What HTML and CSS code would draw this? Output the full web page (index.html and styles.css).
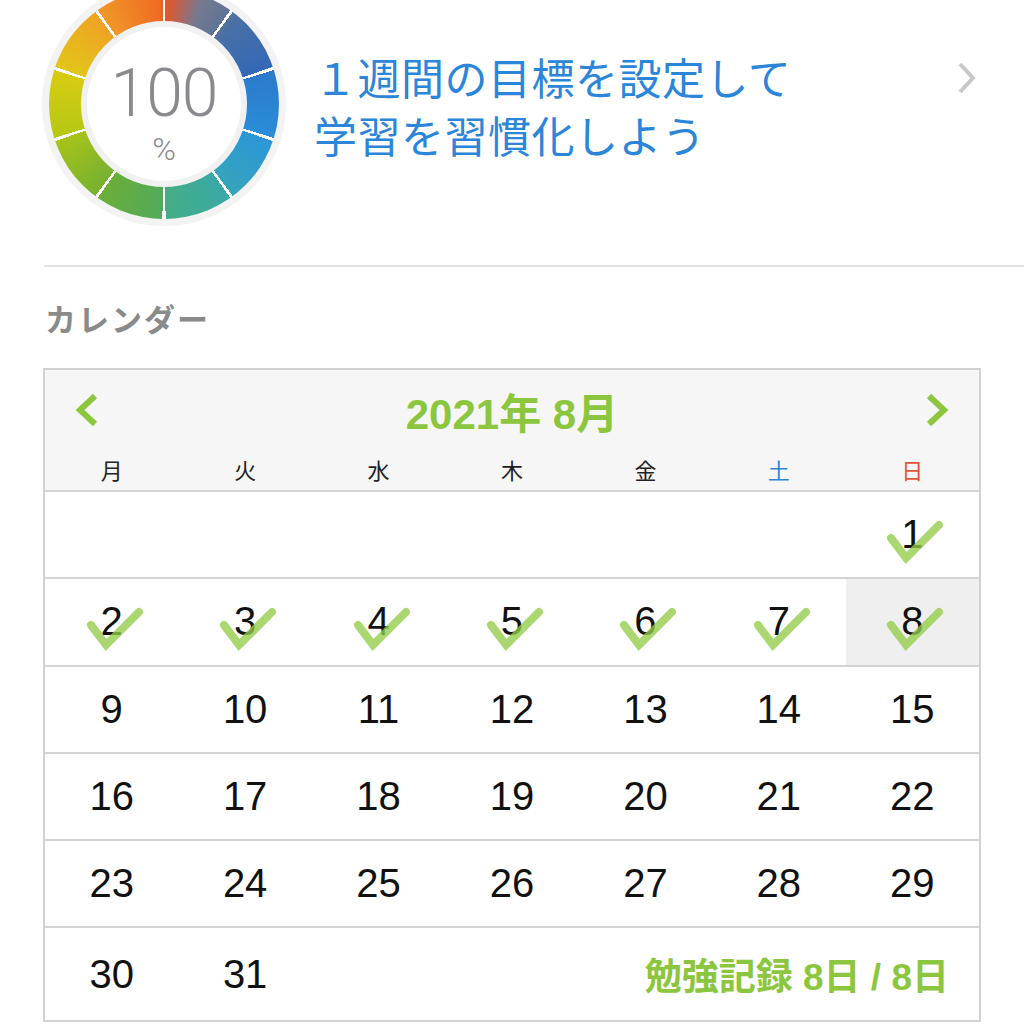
FILE: index.html
```html
<!DOCTYPE html>
<html lang="ja">
<head>
<meta charset="utf-8">
<link rel="stylesheet" href="styles.css">
</head>
<body>
<section class="goal">
  <div class="ring">
    <div class="ring-inner">
      <span class="pct-num">100</span>
      <span class="pct-sign">%</span>
    </div>
  </div>
  <p class="goal-text">１週間の目標を設定して<br>学習を習慣化しよう</p>
  <svg class="goal-chev" width="22" height="34" viewBox="0 0 22 34"><polyline points="4,3 17,17 4,31" fill="none" stroke="#c7c7cc" stroke-width="4"/></svg>
</section>

<h2 class="section-title">カレンダー</h2>

<div class="calendar">
  <div class="cal-head">
    <div class="cal-nav">
      <svg width="24" height="34" viewBox="0 0 24 34"><polyline points="20,3 5,17 20,31" fill="none" stroke="#8cc63f" stroke-width="6"/></svg>
      <span class="cal-month">2021年 8月</span>
      <svg width="24" height="34" viewBox="0 0 24 34"><polyline points="4,3 19,17 4,31" fill="none" stroke="#8cc63f" stroke-width="6"/></svg>
    </div>
    <div class="cal-week">
      <span>月</span><span>火</span><span>水</span><span>木</span><span>金</span><span class="sat">土</span><span class="sun">日</span>
    </div>
  </div>

  <div class="week">
    <div class="day"></div><div class="day"></div><div class="day"></div><div class="day"></div><div class="day"></div><div class="day"></div>
    <div class="day done">1<svg class="check" viewBox="-30 -16 64 46"><polyline points="-21,3 -6,23 27,-10"/></svg></div>
  </div>
  <div class="week">
    <div class="day done">2<svg class="check" viewBox="-30 -16 64 46"><polyline points="-21,3 -6,23 27,-10"/></svg></div>
    <div class="day done">3<svg class="check" viewBox="-30 -16 64 46"><polyline points="-21,3 -6,23 27,-10"/></svg></div>
    <div class="day done">4<svg class="check" viewBox="-30 -16 64 46"><polyline points="-21,3 -6,23 27,-10"/></svg></div>
    <div class="day done">5<svg class="check" viewBox="-30 -16 64 46"><polyline points="-21,3 -6,23 27,-10"/></svg></div>
    <div class="day done">6<svg class="check" viewBox="-30 -16 64 46"><polyline points="-21,3 -6,23 27,-10"/></svg></div>
    <div class="day done">7<svg class="check" viewBox="-30 -16 64 46"><polyline points="-21,3 -6,23 27,-10"/></svg></div>
    <div class="day done today">8<svg class="check" viewBox="-30 -16 64 46"><polyline points="-21,3 -6,23 27,-10"/></svg></div>
  </div>
  <div class="week">
    <div class="day">9</div><div class="day">10</div><div class="day">11</div><div class="day">12</div><div class="day">13</div><div class="day">14</div><div class="day">15</div>
  </div>
  <div class="week">
    <div class="day">16</div><div class="day">17</div><div class="day">18</div><div class="day">19</div><div class="day">20</div><div class="day">21</div><div class="day">22</div>
  </div>
  <div class="week">
    <div class="day">23</div><div class="day">24</div><div class="day">25</div><div class="day">26</div><div class="day">27</div><div class="day">28</div><div class="day">29</div>
  </div>
  <div class="week last">
    <div class="day">30</div><div class="day">31</div>
    <div class="record">勉強記録 8日 / 8日</div>
  </div>
</div>
</body>
</html>
```
FILE: styles.css
```css
html, body {
  margin: 0;
  padding: 0;
  background: #ffffff;
}
body {
  width: 1024px;
  height: 1024px;
  overflow: hidden;
  font-family: "Liberation Sans", "Noto Sans CJK JP", sans-serif;
}

/* ---------- goal section ---------- */
.goal {
  display: flex;
  align-items: flex-start;
  margin-left: 44px;
  height: 265px;
  border-bottom: 2px solid #e2e2e2;
}
.ring {
  flex: none;
  width: 230px;
  height: 230px;
  margin-top: -11px;
  margin-left: 5px;
  border-radius: 50%;
  box-shadow: 0 0 0 7px #f3f3f3;
  display: flex;
  align-items: center;
  justify-content: center;
  background:
    repeating-conic-gradient(from -0.8deg, #ffffff 0deg 1.6deg, transparent 1.6deg 36deg),
    conic-gradient(
      #e8561c 0deg, #b4655a 10deg, #76798f 20deg, #5d7497 36deg,
      #4a70a6 40deg, #3468b6 70deg,
      #2c7bcc 74deg, #2a8cd8 106deg,
      #2b97d6 110deg, #35a4bc 142deg,
      #3aa9a6 146deg, #45ad86 178deg,
      #52aa5a 182deg, #6aae3a 214deg,
      #78b230 218deg, #a6c21a 250deg,
      #b8c814 254deg, #d6cc12 286deg,
      #e2c41a 290deg, #f0a424 322deg,
      #f09628 326deg, #ef6a22 358deg, #e8561c 360deg
    );
}
.ring-inner {
  box-sizing: border-box;
  width: 166px;
  height: 166px;
  border-radius: 50%;
  background: #ffffff;
  border: 6px solid #f1f1f1;
  display: flex;
  flex-direction: column;
  align-items: center;
  padding-top: 34px;
  color: #8a8a8e;
  font-family: Roboto, "Liberation Sans", sans-serif;
  font-weight: 300;
}
.pct-num {
  font-size: 66px;
  line-height: 66px;
  letter-spacing: -1px;
}
.pct-sign {
  margin-top: 6px;
  font-size: 32px;
  line-height: 32px;
}
.goal-text {
  margin: 47px 0 0 35px;
  font-family: "Noto Sans CJK JP", sans-serif;
  font-weight: 400;
  font-size: 43px;
  line-height: 58px;
  letter-spacing: 0.5px;
  color: #2b86da;
}
.goal-chev {
  flex: none;
  margin-left: auto;
  margin-right: 46px;
  margin-top: 61px;
}

/* ---------- section title ---------- */
.section-title {
  margin: 31px 0 0 45px;
  font-family: "Noto Sans CJK JP", sans-serif;
  font-weight: 700;
  font-size: 31px;
  line-height: 40px;
  letter-spacing: 2px;
  color: #8a8a8a;
}

/* ---------- calendar ---------- */
.calendar {
  margin: 30px 0 0 43px;
  width: 938px;
  box-sizing: border-box;
  border: 2px solid #d2d2d2;
  border-bottom: none;
}
.cal-head {
  background: #f6f6f6;
  padding-top: 12px;
  border-bottom: 2px solid #d4d4d4;
}
.cal-nav {
  height: 56px;
  display: flex;
  align-items: center;
  justify-content: space-between;
  padding: 0 30px;
}
.cal-month {
  font-family: "Liberation Sans", "Noto Sans CJK JP", sans-serif;
  font-weight: 700;
  font-size: 42px;
  color: #8cc63f;
}
.cal-week {
  margin-top: 12px;
  height: 40px;
  display: grid;
  grid-template-columns: repeat(7, 1fr);
  font-family: "Noto Sans CJK JP", sans-serif;
  font-size: 22px;
  line-height: 38px;
  text-align: center;
  color: #222222;
}
.cal-week .sat { color: #2f86d6; }
.cal-week .sun { color: #e5533f; }

.week {
  display: grid;
  grid-template-columns: repeat(7, 1fr);
  height: 85.3px;
  border-top: 2px solid #d4d4d4;
}
.cal-head + .week {
  border-top: none;
}
.week.last {
  height: 92px;
  border-bottom: 2px solid #d2d2d2;
}
.day {
  position: relative;
  display: flex;
  align-items: center;
  justify-content: center;
  font-family: "Liberation Sans", sans-serif;
  font-size: 40px;
  color: #111111;
}
.day.today {
  background: #efefef;
}
.check {
  position: absolute;
  left: 50%;
  top: 50%;
  width: 64px;
  height: 46px;
  margin-left: -30px;
  margin-top: -16px;
  overflow: visible;
}
.check polyline {
  fill: none;
  stroke: rgba(146, 204, 72, 0.78);
  stroke-width: 8;
  stroke-linecap: round;
  stroke-linejoin: miter;
}
.record {
  grid-column: 3 / 8;
  display: flex;
  align-items: center;
  justify-content: flex-end;
  padding-right: 30px;
  font-family: "Liberation Sans", "Noto Sans CJK JP", sans-serif;
  font-weight: 700;
  font-size: 37px;
  color: #8cc63f;
}
```
